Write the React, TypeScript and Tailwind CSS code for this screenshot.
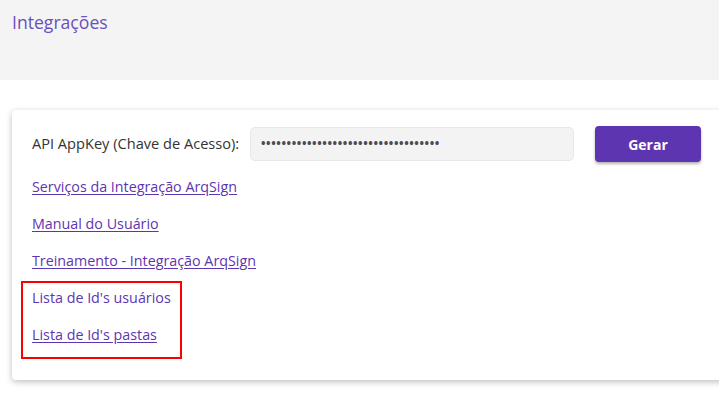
import React from "react";

const links = [
  { label: "Serviços da Integração ArqSign" },
  { label: "Manual do Usuário" },
  { label: "Treinamento - Integração ArqSign" },
];

export default function App() {
  const font = { fontFamily: '"Open Sans", "Liberation Sans", sans-serif' };

  return (
    <div className="min-h-[400px] w-[719px] overflow-hidden bg-white" style={font}>
      {/* Header */}
      <div className="h-[80px] bg-[#f4f4f4] px-3 pt-[10px]">
        <h1 className="text-[17.6px] leading-[24px] text-[#6a4fc0]">Integrações</h1>
      </div>

      {/* Card */}
      <div className="ml-3 mt-[30px] w-[730px] rounded-[4px] bg-white pb-[21px] pl-5 pt-[16px] shadow-[0_2px_6px_rgba(0,0,0,0.25)]">
        <div className="flex items-center">
          <span className="w-[218px] whitespace-nowrap text-[14.6px] text-[#333]">API AppKey (Chave de Acesso):</span>
          <div className="flex h-[34px] w-[324px] items-center rounded-[5px] border border-[#e8e8e8] bg-[#f3f3f3] pl-[10px]">
            <span className="text-[12px] font-bold leading-none tracking-[0.6px] text-[#4a4a55]">
              {"•".repeat(35)}
            </span>
          </div>
          <button className="ml-[21px] h-[36px] w-[106px] rounded-[4px] bg-[#5e35b1] text-[14px] font-bold text-white shadow-[0_2px_3px_rgba(0,0,0,0.3)]">
            Gerar
          </button>
        </div>

        <div className="mt-[15px] flex flex-col">
          {links.map((l) => (
            <a
              key={l.label}
              href="#"
              className="mb-[17px] whitespace-nowrap text-[14.3px] leading-[20px] text-[#5e35b1] underline underline-offset-2"
            >
              {l.label}
            </a>
          ))}
          <div className="-ml-[11px] -mt-[7px] w-[161px] border-2 border-[#ff0000] pb-[12px] pl-[9px] pt-[5px]">
            <a href="#" className="block whitespace-nowrap text-[14.3px] leading-[20px] text-[#5e35b1] no-underline">
              Lista de Id's usuários
            </a>
            <a
              href="#"
              className="mt-[17px] block whitespace-nowrap text-[14.3px] leading-[20px] text-[#5e35b1] underline underline-offset-2"
            >
              Lista de Id's pastas
            </a>
          </div>
        </div>
      </div>
    </div>
  );
}
